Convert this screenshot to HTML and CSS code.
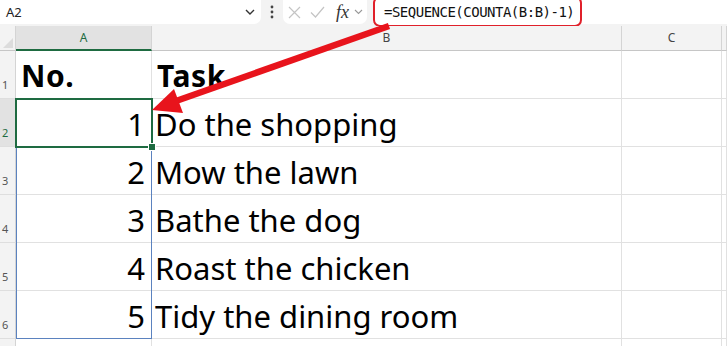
FILE: index.html
```html
<!DOCTYPE html>
<html lang="en">

<head>
    <meta charset="UTF-8">
    <meta name="viewport" content="width=device-width, initial-scale=1.0">
    <title>SEQUENCE with COUNTA</title>
    <link rel="stylesheet" href="styles.css">
</head>

<body>
    <div class="page">

        <!-- name box + formula bar -->
        <div class="toolbar">
            <div class="namebox">
                <span>A2</span>
                <svg class="chev" width="10" height="6" viewBox="0 0 10 6"><polyline points="1,1 5,5 9,1" /></svg>
            </div>
            <svg class="dots" width="4" height="14" viewBox="0 0 4 14">
                <circle cx="2" cy="2" r="1.4" />
                <circle cx="2" cy="7" r="1.4" />
                <circle cx="2" cy="12" r="1.4" />
            </svg>
            <div class="fxbox">
                <svg class="faint" width="13" height="13" viewBox="0 0 13 13"><path d="M1 1L12 12M12 1L1 12" /></svg>
                <svg class="faint" width="15" height="12" viewBox="0 0 15 12"><polyline points="1,6.5 5.5,11 14,1" /></svg>
                <span class="fx">fx</span>
                <svg class="chev small" width="9" height="6" viewBox="0 0 9 6"><polyline points="1,1 4.5,4.5 8,1" /></svg>
            </div>
            <div class="formula">
                <span class="formula-text">=SEQUENCE(COUNTA(B:B)-1)</span>
            </div>
        </div>

        <!-- worksheet -->
        <div class="sheet">
            <div class="corner"></div>
            <div class="colhead active">A</div>
            <div class="colhead">B</div>
            <div class="colhead">C</div>
            <div class="colhead"></div>

            <div class="rowhead">1</div>
            <div class="cell head">No.</div>
            <div class="cell head">Task</div>
            <div class="cell"></div>
            <div class="cell"></div>

            <div class="rowhead active">2</div>
            <div class="cell num">1</div>
            <div class="cell">Do the shopping</div>
            <div class="cell"></div>
            <div class="cell"></div>

            <div class="rowhead">3</div>
            <div class="cell num">2</div>
            <div class="cell">Mow the lawn</div>
            <div class="cell"></div>
            <div class="cell"></div>

            <div class="rowhead">4</div>
            <div class="cell num">3</div>
            <div class="cell">Bathe the dog</div>
            <div class="cell"></div>
            <div class="cell"></div>

            <div class="rowhead">5</div>
            <div class="cell num">4</div>
            <div class="cell">Roast the chicken</div>
            <div class="cell"></div>
            <div class="cell"></div>

            <div class="rowhead">6</div>
            <div class="cell num">5</div>
            <div class="cell">Tidy the dining room</div>
            <div class="cell"></div>
            <div class="cell"></div>

            <div class="rowhead"></div>
            <div class="cell"></div>
            <div class="cell"></div>
            <div class="cell"></div>
            <div class="cell"></div>

            <!-- spill range and active cell -->
            <div class="spill"></div>
            <div class="selection"><span class="handle"></span></div>
        </div>

        <!-- annotation arrow -->
        <svg class="arrow" width="727" height="346" viewBox="0 0 727 346">
            <line x1="176" y1="101" x2="389" y2="26" />
            <polygon points="152,110 174,89 183,113" />
        </svg>
    </div>
</body>

</html>
```

FILE: styles.css
```css
body {
    margin: 0;
    background: #fff;
    font-family: "Noto Sans", sans-serif;
}

.page {
    position: relative;
    width: 727px;
    height: 346px;
    overflow: hidden;
}

/* ---- formula bar ---- */
.toolbar {
    display: flex;
    align-items: flex-start;
    height: 26px;
    background: #f3f3f3;
}

.namebox {
    display: flex;
    align-items: center;
    justify-content: space-between;
    width: 261px;
    height: 24px;
    box-sizing: border-box;
    padding: 0 6px 0 6px;
    background: #fff;
    border-radius: 0 0 7px 0;
    font-size: 13px;
    color: #222;
}

.chev {
    fill: none;
    stroke: #333;
    stroke-width: 1.4;
}

.chev.small {
    stroke: #999;
    stroke-width: 1.1;
}

.dots {
    margin: 5px 9px 0 9px;
    fill: #444;
}

.fxbox {
    display: flex;
    align-items: center;
    gap: 9px;
    width: 84px;
    height: 24px;
    box-sizing: border-box;
    padding-left: 5px;
    background: #fff;
    border-radius: 0 0 7px 7px;
}

.faint {
    fill: none;
    stroke: #c4c4c4;
    stroke-width: 1.2;
}

.fx {
    font-family: "Liberation Serif", serif;
    font-style: italic;
    font-size: 18px;
    color: #333;
    margin-left: 2px;
    margin-right: -4px;
}

.formula {
    flex: 1;
    height: 24px;
    margin-left: 6px;
    background: #fff;
}

.formula-text {
    display: inline-block;
    height: 31px;
    margin-top: -4px;
    box-sizing: border-box;
    padding: 6px 8px 0 9px;
    width: 209px;
    border: 2px solid #e0202a;
    border-radius: 7px;
    font-family: "DejaVu Sans Mono", monospace;
    font-size: 14px;
    letter-spacing: -0.5px;
    color: #111;
    background: #fff;
}

/* ---- worksheet grid ---- */
.sheet {
    position: relative;
    display: grid;
    grid-template-columns: 16px 136px 470px 100px 1fr;
    grid-template-rows: 25px repeat(7, 48px);
}

.corner {
    background: #f3f3f3;
    border-right: 1px solid #d4d4d4;
    border-bottom: 1px solid #c6c6c6;
    position: relative;
}

.corner::after {
    content: "";
    position: absolute;
    right: 2px;
    bottom: 2px;
    border-left: 10px solid transparent;
    border-bottom: 10px solid #dcdcdc;
}

.colhead {
    display: flex;
    align-items: flex-end;
    justify-content: center;
    padding-bottom: 4px;
    background: #f3f3f3;
    border-right: 1px solid #d4d4d4;
    border-bottom: 1px solid #c6c6c6;
    font-size: 12px;
    color: #444;
}

.colhead.active {
    background: #e2e2e2;
    color: #1e6b41;
    border-bottom: 2px solid #1e6b41;
    padding-bottom: 3px;
}

.rowhead {
    display: flex;
    align-items: flex-end;
    padding: 0 0 6px 2px;
    background: #f3f3f3;
    border-right: 1px solid #d4d4d4;
    border-bottom: 1px solid #dedede;
    font-size: 11px;
    color: #555;
}

.rowhead.active {
    background: #e2e2e2;
    color: #1e6b41;
}

.cell {
    display: flex;
    align-items: flex-end;
    padding: 0 0 6px 3px;
    border-right: 1px solid #e1e1e1;
    border-bottom: 1px solid #e1e1e1;
    font-size: 31px;
    line-height: 1;
    color: #000;
    white-space: nowrap;
}

.cell.head {
    font-weight: bold;
    font-size: 30px;
    letter-spacing: 0.6px;
    padding-bottom: 7px;
    padding-left: 5px;
}

.cell.num {
    justify-content: flex-end;
    padding-right: 6px;
}

.spill {
    position: absolute;
    left: 16px;
    top: 72px;
    width: 136px;
    height: 241px;
    box-sizing: border-box;
    border: 1px solid #5b82bf;
}

.selection {
    position: absolute;
    left: 15px;
    top: 72px;
    width: 138px;
    height: 50px;
    box-sizing: border-box;
    border: 2px solid #1e6b41;
}

.handle {
    position: absolute;
    right: -5px;
    bottom: -5px;
    width: 6px;
    height: 6px;
    background: #1e6b41;
    border: 1px solid #fff;
}

/* ---- annotation ---- */
.arrow {
    position: absolute;
    left: 0;
    top: 0;
    pointer-events: none;
}

.arrow line {
    stroke: #e8141c;
    stroke-width: 6.5;
}

.arrow polygon {
    fill: #e8141c;
}
```
